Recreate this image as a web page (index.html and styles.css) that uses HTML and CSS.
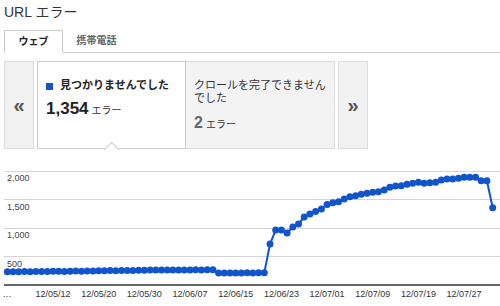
FILE: index.html
```html
<!DOCTYPE html>
<html lang="ja">
<head>
    <meta charset="UTF-8">
    <title>URL エラー</title>
    <link rel="stylesheet" href="styles.css">
</head>
<body>
    <div class="page-title">URL エラー</div>

    <div class="tabs">
        <div class="tab tab-active">ウェブ</div>
        <div class="tab">携帯電話</div>
    </div>

    <div class="summary">
        <div class="pager">&laquo;</div>
        <div class="card card-current">
            <div class="card-label"><span class="swatch"></span>見つかりませんでした</div>
            <div class="card-count">1,354<span class="card-unit">エラー</span></div>
        </div>
        <div class="card card-other">
            <div class="card-label">クロールを完了できませんでした</div>
            <div class="card-count">2<span class="card-unit">エラー</span></div>
        </div>
        <div class="pager">&raquo;</div>
    </div>

    <svg class="chart" id="chart" width="500" height="157" viewBox="0 0 500 157">
        <line class="grid" x1="4" y1="22.5" x2="500" y2="22.5" />
        <line class="grid" x1="4" y1="50.5" x2="500" y2="50.5" />
        <line class="grid" x1="4" y1="79.5" x2="500" y2="79.5" />
        <line class="grid" x1="4" y1="107.5" x2="500" y2="107.5" />
        <line class="axis" x1="4" y1="136" x2="500" y2="136" />
        <text class="axis-label" x="7" y="32">2,000</text>
        <text class="axis-label" x="7" y="60.5">1,500</text>
        <text class="axis-label" x="7" y="89">1,000</text>
        <text class="axis-label" x="7" y="117.5">500</text>
        <text class="axis-label date-label" x="7" y="148">…</text>
    </svg>

    <script>
        const counts = [
            232, 234, 233, 235, 234, 236, 235, 237,
            240, 241, 239, 242, 243, 241, 244,
            248, 250, 249, 252, 251, 253, 252, 254,
            258, 260, 262, 261, 263, 262, 264, 263, 265, 264, 266, 265, 267, 266,
            212, 210, 211, 213, 212, 214, 213, 215, 214,
            719, 965, 965, 912, 1018, 1070, 1193, 1246, 1289, 1333,
            1412, 1444, 1461, 1509, 1549, 1567, 1591, 1609, 1626, 1637,
            1667, 1714, 1737, 1742, 1767, 1784, 1802, 1784, 1795, 1802,
            1842, 1860, 1860, 1872, 1889, 1889, 1889, 1830, 1830, 1354
        ];
        const dates = ['12/05/12', '12/05/20', '12/05/30', '12/06/07', '12/06/15',
                       '12/06/23', '12/07/01', '12/07/09', '12/07/19', '12/07/27'];

        const chart = document.getElementById('chart');
        const ns = 'http://www.w3.org/2000/svg';
        const step = 5.71;
        const left = 7.3;

        // posicion de cada punto
        const points = counts.map((count, i) => [left + i * step, 136 - count * 0.057]);

        const line = document.createElementNS(ns, 'polyline');
        line.setAttribute('class', 'series-line');
        line.setAttribute('points', points.map(p => p[0].toFixed(1) + ',' + p[1].toFixed(1)).join(' '));
        chart.appendChild(line);

        points.forEach(([x, y]) => {
            const dot = document.createElementNS(ns, 'circle');
            dot.setAttribute('class', 'series-dot');
            dot.setAttribute('cx', x.toFixed(1));
            dot.setAttribute('cy', y.toFixed(1));
            dot.setAttribute('r', 3.5);
            chart.appendChild(dot);
        });

        // una fecha cada 8 puntos
        dates.forEach((date, k) => {
            const label = document.createElementNS(ns, 'text');
            label.setAttribute('class', 'axis-label date-label');
            label.setAttribute('x', (left + (k + 1) * 8 * step).toFixed(1));
            label.setAttribute('y', 148);
            label.textContent = date;
            chart.appendChild(label);
        });
    </script>
</body>
</html>
```

FILE: styles.css
```css
/* Estilos generales */
body {
    margin: 0;
    width: 500px;
    height: 306px;
    overflow: hidden;
    font-family: "Liberation Sans", "Noto Sans CJK JP", sans-serif;
    background-color: #FFFFFF;
    color: #222222;
}

.page-title {
    padding: 3px 0 0 4px;
    font-size: 14px;
    line-height: 18px;
    color: #333333;
}

/* Pestañas */
.tabs {
    display: flex;
    height: 22px;
    margin: 9px 0 0 4px;
    border-bottom: 1px solid #CCCCCC;
}

.tab {
    box-sizing: border-box;
    width: 59px;
    margin-left: 4px;
    font-size: 10px;
    font-weight: bold;
    line-height: 21px;
    text-align: center;
    color: #666666;
}

.tab-active {
    height: 23px;
    margin-left: 0;
    border: 1px solid #CCCCCC;
    border-bottom-color: #FFFFFF;
    background-color: #FFFFFF;
    color: #222222;
}

/* Resumen */
.summary {
    display: flex;
    gap: 3px;
    height: 88px;
    margin: 8px 0 0 4px;
}

.pager {
    box-sizing: border-box;
    width: 30px;
    display: flex;
    align-items: center;
    justify-content: center;
    border: 1px solid #DDDDDD;
    background-color: #F1F1F1;
    font-size: 20px;
    font-weight: bold;
    color: #555555;
}

.card {
    box-sizing: border-box;
    position: relative;
    padding: 16px 4px 0 8px;
    border: 1px solid #CCCCCC;
}

.card-current {
    width: 149px;
    z-index: 1;
    background-color: #FFFFFF;
}

.card-current::after {
    content: "";
    position: absolute;
    left: 50%;
    bottom: -7px;
    width: 10px;
    height: 10px;
    margin-left: -6px;
    border-left: 1px solid #CCCCCC;
    border-top: 1px solid #CCCCCC;
    background-color: #FFFFFF;
    transform: rotate(45deg);
}

.card-other {
    width: 150px;
    margin-left: -4px;
    border-color: #DDDDDD;
    background-color: #F3F3F3;
}

.card-label {
    font-size: 11px;
    line-height: 14px;
}

.card-current .card-label {
    font-weight: bold;
}

.card-other .card-label {
    margin-top: 1px;
    line-height: 13px;
    color: #333333;
}

.swatch {
    display: inline-block;
    width: 7px;
    height: 7px;
    margin-right: 7px;
    vertical-align: -1px;
    background-color: #1155CC;
}

.card-count {
    margin-top: 7px;
    font-size: 17px;
    font-weight: bold;
    line-height: 20px;
}

.card-other .card-count {
    margin-top: 8px;
    font-size: 16px;
    color: #666666;
}

.card-unit {
    margin-left: 3px;
    font-size: 10px;
    font-weight: normal;
    color: #333333;
}

/* Gráfico */
.chart {
    display: block;
}

.grid {
    stroke: #D4D4D4;
    stroke-width: 1;
}

.axis {
    stroke: #666666;
    stroke-width: 2;
}

.axis-label {
    font-family: "Liberation Sans", sans-serif;
    font-size: 9px;
    fill: #444444;
}

.date-label {
    text-anchor: middle;
    fill: #333333;
}

.series-line {
    fill: none;
    stroke: #1155CC;
    stroke-width: 2;
}

.series-dot {
    fill: #1155CC;
}
```
